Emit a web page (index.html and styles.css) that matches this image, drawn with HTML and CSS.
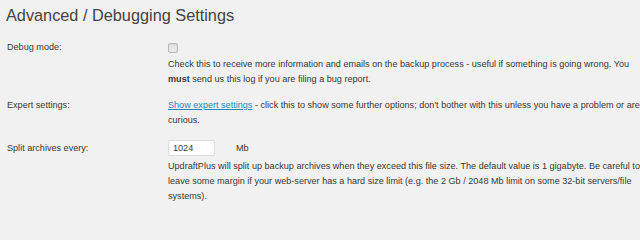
FILE: index.html
```html
<!DOCTYPE html>
<html>
<head>
<meta charset="utf-8">
<link rel="stylesheet" href="styles.css">
</head>
<body>
<div class="page">
  <h2 class="title">Advanced / Debugging Settings</h2>
  <div class="row row-debug">
    <div class="label">Debug mode:</div>
    <div class="field">
      <span class="checkbox"></span>
      <p class="desc">Check this to receive more information and emails on the backup process - useful if something is going wrong. You <strong>must</strong> send us this log if you are filing a bug report.</p>
    </div>
  </div>
  <div class="row row-expert">
    <div class="label">Expert settings:</div>
    <div class="field">
      <p class="desc"><a href="#" class="link">Show expert settings</a> - click this to show some further options; don't bother with this unless you have a problem or are curious.</p>
    </div>
  </div>
  <div class="row row-split">
    <div class="label label-split">Split archives every:</div>
    <div class="field">
      <div class="inputline"><span class="input">1024</span><span class="unit">Mb</span></div>
      <p class="desc">UpdraftPlus will split up backup archives when they exceed this file size. The default value is 1 gigabyte. Be careful to leave some margin if your web-server has a hard size limit (e.g. the 2 Gb / 2048 Mb limit on some 32-bit servers/file systems).</p>
    </div>
  </div>
</div>
</body>
</html>
```

FILE: styles.css
```css
html, body {
  margin: 0;
  padding: 0;
  background: #f1f1f1;
}
.page {
  width: 640px;
  height: 207px;
  overflow: hidden;
  font-family: "Liberation Sans", Arial, sans-serif;
  color: #3a3a3a;
  font-size: 9.1px;
  line-height: 15px;
}
.title {
  margin: 0;
  padding: 6px 0 0 6px;
  font-size: 16.3px;
  line-height: 18px;
  font-weight: normal;
  color: #444;
}
.row {
  display: grid;
  grid-template-columns: 161px 472px;
  padding-left: 7px;
}
.row-debug { margin-top: 16px; }
.row-expert { margin-top: 11px; }
.row-split { margin-top: 12px; }
.label-split { padding-top: 1px; }
.checkbox {
  display: block;
  width: 8px;
  height: 8px;
  margin-top: 3px;
  border: 1px solid #b4b9be;
  border-radius: 2px;
  background: #e8e8e8;
  box-shadow: inset 0 1px 2px rgba(0,0,0,0.1);
}
.desc {
  margin: 0;
}
.row-debug .desc { margin-top: 4px; }
.link {
  color: #2a86b8;
  text-decoration: underline;
}
.inputline {
  display: flex;
  align-items: center;
  height: 16px;
}
.input {
  box-sizing: border-box;
  width: 47px;
  height: 16px;
  padding: 0 4px;
  line-height: 14px;
  background: #fff;
  border: 1px solid #ddd;
  border-radius: 2px;
}
.unit {
  margin-left: 21px;
}
.row-split .desc { margin-top: 3px; }
```
